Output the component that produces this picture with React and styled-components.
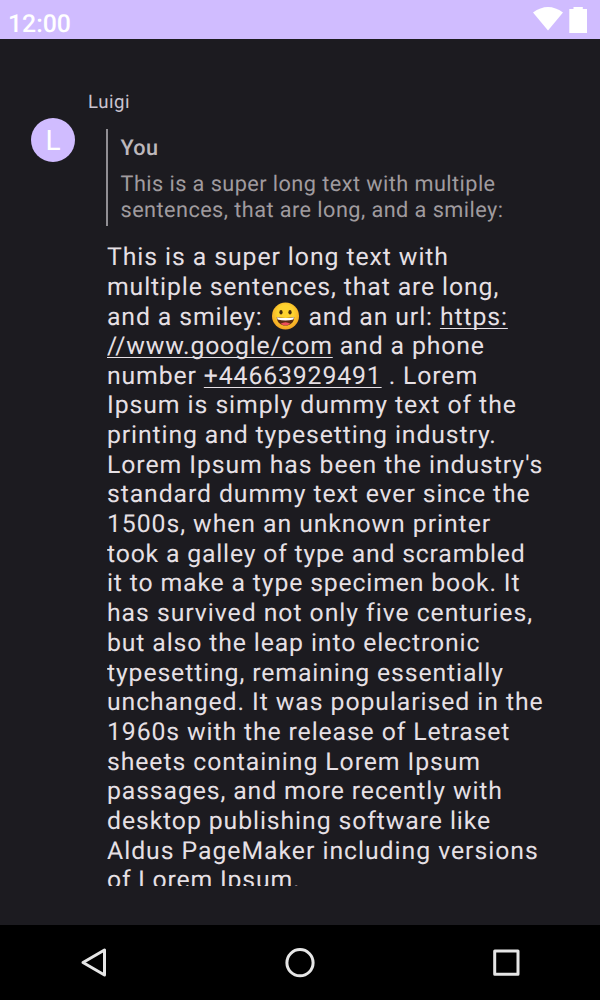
import React from "react";
import styled, { createGlobalStyle } from "styled-components";

const GlobalStyle = createGlobalStyle`
  * { box-sizing: border-box; }
  body { margin: 0; background: #1c1b20; }
`;

const Screen = styled.div`
  display: flex;
  flex-direction: column;
  width: 600px;
  height: 1000px;
  background: #1c1b20;
  color: #e6e0e5;
  font-family: Roboto, sans-serif;
  text-rendering: geometricPrecision;
  overflow: hidden;
`;

const StatusBar = styled.header`
  display: flex;
  justify-content: space-between;
  flex: 0 0 39px;
  padding: 0 12px 0 8px;
  background: #d0bcff;
  color: #fff;
`;

const Clock = styled.span`
  padding-top: 11px;
  font-size: 24.8px;
  line-height: 28px;
  font-weight: 500;
`;

const StatusIcons = styled.svg`
  width: 56px;
  height: 39px;
`;

const Conversation = styled.main`
  display: flex;
  flex: 1;
  min-height: 0;
  padding: 51px 56px 39px 31px;
`;

const Avatar = styled.div`
  display: flex;
  flex: 0 0 44px;
  align-items: center;
  justify-content: center;
  height: 44px;
  margin-top: 28px;
  border-radius: 50%;
  background: #d0bcff;
  color: #fff;
  font-size: 28px;
`;

const Message = styled.article`
  display: flex;
  flex-direction: column;
  flex: 1;
  min-width: 0;
  padding-left: 13px;
`;

const Sender = styled.div`
  font-size: 18.6px;
  line-height: 24px;
  letter-spacing: 0.55px;
  color: #cac4d0;
`;

const Quote = styled.blockquote`
  flex: 0 0 97px;
  margin: 15px 0 0 18px;
  padding: 7px 0 0 12.5px;
  border-left: 2px solid #918f94;
  font-size: 21.7px;
  line-height: 26px;
  letter-spacing: 0.44px;
  color: #a09b9f;
  white-space: nowrap;
`;

const QuoteAuthor = styled.div`
  margin-bottom: 10px;
  font-weight: 500;
  letter-spacing: 0.3px;
  color: #bdb8bc;
`;

const Body = styled.div`
  flex: 1;
  min-height: 0;
  margin: 16px 0 0 19px;
  padding-top: 0.9px;
  overflow: hidden;
  font-size: 24.8px;
  line-height: 29.7px;
`;

const Line = styled.div`
  height: 29.7px;
  letter-spacing: ${({ $tracking = 0.9 }) => $tracking}px;
  white-space: nowrap;
`;

const Link = styled.a`
  letter-spacing: ${({ $tracking }) => ($tracking ? `${$tracking}px` : "inherit")};
  text-decoration: underline;
  text-decoration-thickness: 1.3px;
  text-underline-offset: 3px;
  text-decoration-skip-ink: none;
`;

const EmojiSvg = styled.svg`
  width: 29px;
  height: 28px;
  margin: 0 1.8px 0 0.9px;
  vertical-align: -5px;
`;

const NavBar = styled.nav`
  display: flex;
  flex: 0 0 75px;
  align-items: center;
  justify-content: space-between;
  padding: 0 75px;
  background: #000;
`;

const NavIcon = styled.svg`
  width: 38px;
  height: 38px;
  fill: none;
  stroke: #e6e6e6;
  stroke-width: 3;
  stroke-linejoin: round;
`;

const Smiley = () => (
  <EmojiSvg viewBox="0 0 29 28" role="img" aria-label="grinning face">
    <defs>
      <radialGradient id="face" cx="50%" cy="40%" r="60%">
        <stop offset="0.5" stopColor="#fdd32f" />
        <stop offset="1" stopColor="#f2a022" />
      </radialGradient>
    </defs>
    <circle cx="14.5" cy="14" r="13.5" fill="url(#face)" />
    <ellipse cx="10" cy="10.2" rx="1.6" ry="2.2" fill="#422b0d" />
    <ellipse cx="19" cy="10.2" rx="1.6" ry="2.2" fill="#422b0d" />
    <path d="M5.8 15Q14.5 17 23.2 15C23.2 20.5 19.2 23.6 14.5 23.6S5.8 20.5 5.8 15Z" fill="#5a2a12" />
    <path d="M6 15.2Q14.5 17 23 15.2L22.4 17.6Q14.5 19.6 6.6 17.6Z" fill="#fff" />
    <path d="M9.5 21.8Q14.5 18.8 19.5 21.8Q14.5 25 9.5 21.8Z" fill="#ee4f5a" />
  </EmojiSvg>
);

const OPENING = [
  ["This is a super long text with", 0.92],
  ["multiple sentences, that are long,", 0.87],
];
const REMAINDER = [
  ["Ipsum is simply dummy text of the", 0.93],
  ["printing and typesetting industry.", 0.87],
  ["Lorem Ipsum has been the industry's", 0.92],
  ["standard dummy text ever since the", 0.9],
  ["1500s, when an unknown printer", 0.93],
  ["took a galley of type and scrambled", 0.81],
  ["it to make a type specimen book. It", 0.84],
  ["has survived not only five centuries,", 0.95],
  ["but also the leap into electronic", 0.87],
  ["typesetting, remaining essentially", 0.88],
  ["unchanged. It was popularised in the", 0.92],
  ["1960s with the release of Letraset", 0.88],
  ["sheets containing Lorem Ipsum", 0.92],
  ["passages, and more recently with", 0.88],
  ["desktop publishing software like", 0.9],
  ["Aldus PageMaker including versions", 0.96],
  ["of Lorem Ipsum.", 0.82],
];

const renderLine = ([text, tracking]) => (
  <Line key={text} $tracking={tracking}>{text}</Line>
);

export default function App() {
  return (
    <Screen>
      <GlobalStyle />
      <StatusBar>
        <Clock>12:00</Clock>
        <StatusIcons viewBox="0 0 56 39" fill="#fff">
          <path d="M1 12.5Q16 1.5 31 12.5L16 30.5Z" />
          <path d="M37.3 9H41.5V7H50.8V9H55V33H37.3Z" />
        </StatusIcons>
      </StatusBar>
      <Conversation>
        <Avatar>L</Avatar>
        <Message>
          <Sender>Luigi</Sender>
          <Quote>
            <QuoteAuthor>You</QuoteAuthor>
            <div>This is a super long text with multiple</div>
            <div>sentences, that are long, and a smiley:</div>
          </Quote>
          <Body>
            {OPENING.map(renderLine)}
            <Line $tracking={0.88}>and a smiley: <Smiley /> and an url: <Link>https:</Link></Line>
            <Line $tracking={0.86}><Link $tracking={0.79}>//www.google/com</Link> and a phone</Line>
            <Line $tracking={0.87}>number <Link>+44663929491</Link> . Lorem</Line>
            {REMAINDER.map(renderLine)}
          </Body>
        </Message>
      </Conversation>
      <NavBar>
        <NavIcon viewBox="0 0 38 38"><path d="M8 18.5L29.5 6V31Z" /></NavIcon>
        <NavIcon viewBox="0 0 38 38"><circle cx="19" cy="18.7" r="13.1" /></NavIcon>
        <NavIcon viewBox="0 0 38 38"><rect x="7.7" y="7" width="23.3" height="23.3" /></NavIcon>
      </NavBar>
    </Screen>
  );
}
